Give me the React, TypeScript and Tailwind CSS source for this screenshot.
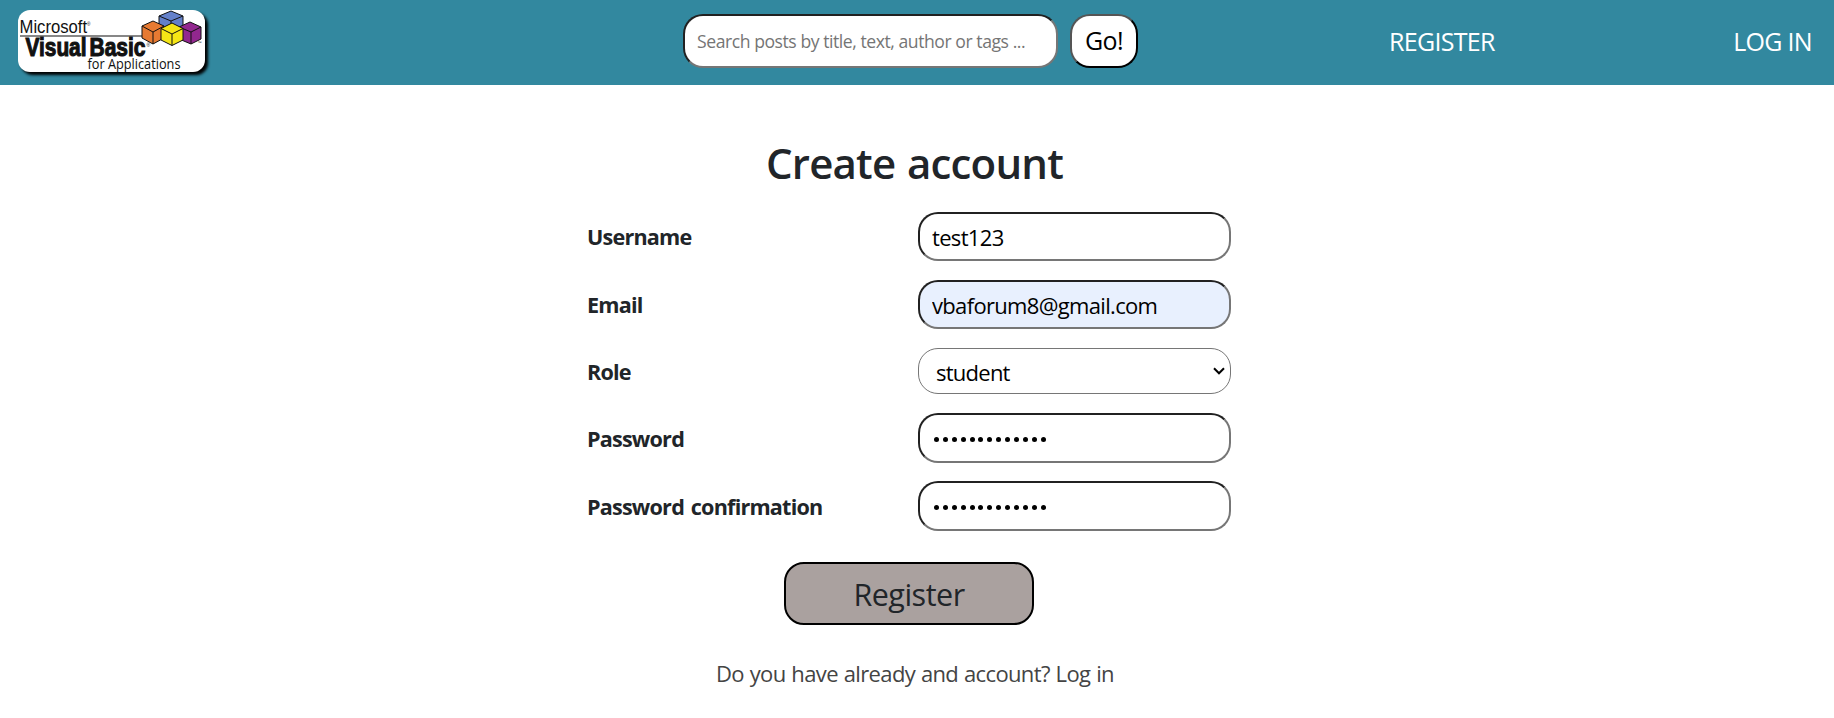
import React from "react";

const inset = "border-2 border-t-[#212121] border-l-[#212121] border-r-[#767676] border-b-[#767676]";

function Logo() {
  return (
    <div className="h-[62px] w-[187px] rounded-[12px] bg-white shadow-[3px_3px_3px_#000]">
      <svg width="187" height="62" viewBox="18 10 187 62" className="block">
        <g fill="#111" fontFamily="'Liberation Sans', Arial, sans-serif">
          <text x="19.5" y="33" fontSize="18" textLength="71" lengthAdjust="spacingAndGlyphs">Microsoft<tspan dy="-7" fontSize="5">®</tspan></text>
          <g fontSize="25" fontWeight="700" stroke="#111" strokeWidth="1.1">
            <text x="25.5" y="55.7" textLength="61" lengthAdjust="spacingAndGlyphs">Visual</text>
            <text x="89.5" y="55.7" textLength="56" lengthAdjust="spacingAndGlyphs">Basic</text>
          </g>
          <text x="146.5" y="47" fontSize="5">®</text>
          <text x="197.5" y="44" fontSize="4">™</text>
        </g>
        <text x="87.5" y="68.5" fontSize="14.5" fill="#111" fontFamily="'Open Sans', sans-serif" textLength="93" lengthAdjust="spacingAndGlyphs">for Applications</text>
        <path d="M20 36H144" stroke="#111" strokeWidth="1.2" />
        <g stroke="#111" strokeWidth="1" strokeLinejoin="round">
          <path d="M171 11l12 5v11l-12 6l-12-6V16z" fill="#6480ca" />
          <path d="M159 16l12 5l12-5M171 21v12" fill="none" />
          <path d="M190 22l11 5v12l-10 5l-12-5V27z" fill="#92278f" />
          <path d="M179 27l12 5l10-5M191 32v12" fill="none" />
          <path d="M153 21l11 5v12l-11 6l-11-6V26z" fill="#e67a32" />
          <path d="M142 26l11 6l11-6M153 32v12" fill="none" />
          <path d="M172 23l11 5.500v11.500l-11 5.500l-11-5.500V28.500z" fill="#f5e616" />
          <path d="M161 28.500l11 5.500l11-5.500M172 34v11.500" fill="none" />
        </g>
      </svg>
    </div>
  );
}

function Row({ label, height, children }: { label: string; height: string; children: React.ReactNode }) {
  return (
    <div className={`flex items-center justify-between ${height}`}>
      <span className="pt-[2px] text-[21.6px] font-bold tracking-[-0.8px] [word-spacing:2px] whitespace-nowrap">{label}</span>
      {children}
    </div>
  );
}

const field = `h-full w-[313px] rounded-[20px] px-[12px] text-[22px] tracking-[-0.67px] text-black outline-none ${inset}`;

function Dots() {
  return (
    <div className={`${field} flex items-center gap-[3.9px] pt-[2px] pl-[14px]`}>
      {Array.from({ length: 13 }, (_, i) => (
        <span key={i} className="size-[5px] rounded-full bg-black" />
      ))}
    </div>
  );
}

export default function App() {
  return (
    <div className="h-[718px] overflow-hidden bg-white font-['Open_Sans','Noto_Sans',sans-serif] text-[#212529]">
      <header className="flex h-[85px] bg-[#32889f] pl-[18px]">
        <div className="w-[665px] pt-[10px]"><Logo /></div>
        <div className="flex w-[706px] gap-[12px] pt-[14px]">
          <input placeholder="Search posts by title, text, author or tags ..." className={`h-[54px] w-[375px] rounded-[20px] bg-white px-[12px] text-[17.6px] tracking-[-0.45px] placeholder-[#757575] ${inset}`} />
          <button className="h-[54px] w-[68px] rounded-[20px] border-2 border-t-[#555] border-r-black border-b-black border-l-[#555] bg-white text-[25px] tracking-[-0.6px] text-black">Go!</button>
        </div>
        <nav className="flex flex-1 items-center justify-between pr-[22px] pb-[2px] text-[25px] tracking-[-0.7px] text-white">
          <a>REGISTER</a>
          <a>LOG IN</a>
        </nav>
      </header>
      <main className="ml-[587px] flex w-[644px] flex-col">
        <h1 className="mt-[50px] ml-[179px] h-[56px] text-[42px] leading-[56px] font-semibold tracking-[-0.8px] [word-spacing:1.5px] whitespace-nowrap">Create account</h1>
        <form className="mt-[21px] flex flex-col gap-[19px]">
          <Row label="Username" height="h-[49px]"><input defaultValue="test123" className={field} /></Row>
          <Row label="Email" height="h-[49px]"><input defaultValue="vbaforum8@gmail.com" className={`${field} bg-[#e8f0fe]`} /></Row>
          <Row label="Role" height="h-[46px]">
            <div className="flex h-full w-[313px] items-center justify-between rounded-[20px] border border-[#767676] pr-[5px] pl-[17px] text-[22px] tracking-[-0.75px] text-black">
              <span className="pt-[2px]">student</span>
              <svg width="12" height="8" viewBox="0 0 12 8"><path d="M1 1.3l5 5l5-5" fill="none" stroke="#000" strokeWidth="2" /></svg>
            </div>
          </Row>
          <Row label="Password" height="h-[50px]"><Dots /></Row>
          <Row label="Password confirmation" height="h-[50px] -mt-px"><Dots /></Row>
        </form>
        <button className="mt-[31px] ml-[197px] h-[63px] w-[250px] rounded-[20px] border-2 border-black bg-[#aaa19f] pt-[2px] text-[30.5px] tracking-[-0.5px]">Register</button>
        <p className="mt-[31px] ml-[129px] text-[22px] leading-[34px] tracking-[-0.63px] [word-spacing:0.7px] whitespace-nowrap text-[#444]">Do you have already and account? <a>Log in</a></p>
      </main>
    </div>
  );
}
